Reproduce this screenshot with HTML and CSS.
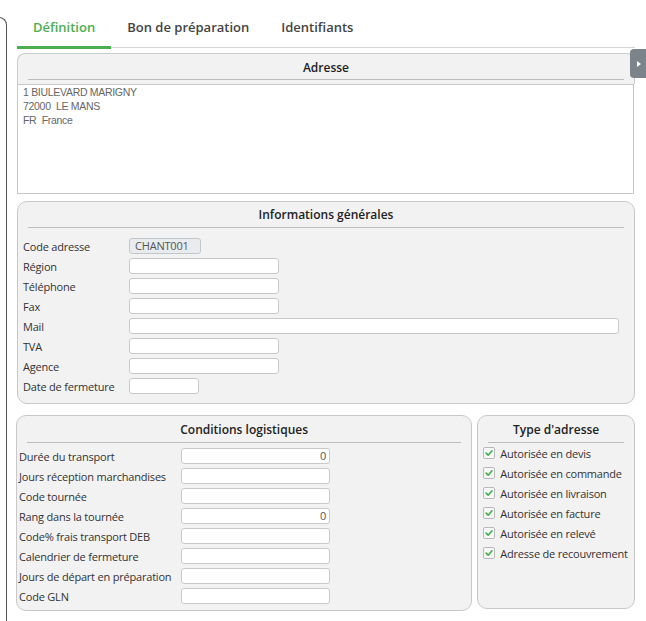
FILE: index.html
```html
<!DOCTYPE html>
<html lang="fr">
<head>
    <meta charset="UTF-8">
    <title>Adresse - Définition</title>
    <link rel="stylesheet" href="styles.css">
</head>
<body>
    <div class="sidebar"></div>

    <main class="content">
        <nav class="tabs">
            <div class="tab active">Définition</div>
            <div class="tab">Bon de préparation</div>
            <div class="tab">Identifiants</div>
        </nav>

        <section class="address-panel">
            <div class="panel-head">
                <h2 class="panel-title">Adresse</h2>
            </div>
            <div class="address-box">
                <div>1 BIULEVARD MARIGNY</div>
                <div>72000&nbsp; LE MANS</div>
                <div>FR&nbsp; France</div>
            </div>
        </section>

        <section class="panel info-panel">
            <h2 class="panel-title">Informations générales</h2>
            <div class="form-rows">
                <div class="row"><label>Code adresse</label><div class="field field-code">CHANT001</div></div>
                <div class="row"><label>Région</label><div class="field field-md"></div></div>
                <div class="row"><label>Téléphone</label><div class="field field-md"></div></div>
                <div class="row"><label>Fax</label><div class="field field-md"></div></div>
                <div class="row"><label>Mail</label><div class="field field-wide"></div></div>
                <div class="row"><label>TVA</label><div class="field field-md"></div></div>
                <div class="row"><label>Agence</label><div class="field field-md"></div></div>
                <div class="row"><label>Date de fermeture</label><div class="field field-sm"></div></div>
            </div>
        </section>

        <div class="bottom-row">
            <section class="panel logistic-panel">
                <h2 class="panel-title">Conditions logistiques</h2>
                <div class="form-rows">
                    <div class="row"><label>Durée du transport</label><div class="field num">0</div></div>
                    <div class="row"><label>Jours réception marchandises</label><div class="field"></div></div>
                    <div class="row"><label>Code tournée</label><div class="field"></div></div>
                    <div class="row"><label>Rang dans la tournée</label><div class="field num">0</div></div>
                    <div class="row"><label>Code% frais transport DEB</label><div class="field"></div></div>
                    <div class="row"><label>Calendrier de fermeture</label><div class="field"></div></div>
                    <div class="row"><label>Jours de départ en préparation</label><div class="field"></div></div>
                    <div class="row"><label>Code GLN</label><div class="field"></div></div>
                </div>
            </section>

            <section class="panel type-panel">
                <h2 class="panel-title">Type d'adresse</h2>
                <ul class="checks">
                    <li><span class="box"><svg viewBox="0 0 12 12"><polyline points="2.5,6.2 5,8.6 9.6,3.4"/></svg></span>Autorisée en devis</li>
                    <li><span class="box"><svg viewBox="0 0 12 12"><polyline points="2.5,6.2 5,8.6 9.6,3.4"/></svg></span>Autorisée en commande</li>
                    <li><span class="box"><svg viewBox="0 0 12 12"><polyline points="2.5,6.2 5,8.6 9.6,3.4"/></svg></span>Autorisée en livraison</li>
                    <li><span class="box"><svg viewBox="0 0 12 12"><polyline points="2.5,6.2 5,8.6 9.6,3.4"/></svg></span>Autorisée en facture</li>
                    <li><span class="box"><svg viewBox="0 0 12 12"><polyline points="2.5,6.2 5,8.6 9.6,3.4"/></svg></span>Autorisée en relevé</li>
                    <li><span class="box"><svg viewBox="0 0 12 12"><polyline points="2.5,6.2 5,8.6 9.6,3.4"/></svg></span>Adresse de recouvrement</li>
                </ul>
            </section>
        </div>
    </main>

    <!-- side drawer handle -->
    <div class="drawer-handle"><span class="arrow"></span></div>
</body>
</html>
```

FILE: styles.css
```css
* {
    margin: 0;
    padding: 0;
    box-sizing: border-box;
}

body {
    font-family: 'Open Sans', sans-serif;
    font-size: 11px;
    letter-spacing: -0.2px;
    color: #333;
    background: #fff;
    display: flex;
    align-items: flex-start;
    width: 646px;
    height: 621px;
    overflow: hidden;
    position: relative;
}

/* edge of the left panel */
.sidebar {
    width: 8px;
    height: 620px;
    margin-top: 17px;
    margin-left: -1px;
    border-top: 1px solid #555;
    border-right: 1px solid #555;
    border-top-right-radius: 8px;
    flex-shrink: 0;
}

.content {
    margin-left: 10px;
    width: 618px;
}

/* Tabs */
.tabs {
    display: flex;
    border-bottom: 1px solid #d4d4d4;
}

.tab {
    padding: 18px 16px 10px;
    line-height: 18px;
    font-size: 13px;
    font-weight: 600;
    letter-spacing: 0;
    color: #444;
    border-bottom: 3px solid transparent;
    margin-bottom: -2px;
}

.tab.active {
    color: #4cae4f;
    border-bottom-color: #4cae4f;
}

/* Panels */
.panel-title {
    font-size: 12px;
    font-weight: 600;
    letter-spacing: 0;
    line-height: 18px;
    color: #222;
    text-align: center;
    margin: 0 10px;
    padding-bottom: 3px;
    border-bottom: 1px solid #bdbdbd;
}

.address-panel {
    margin-top: 5px;
}

.panel-head {
    background: #f2f2f2;
    border: 1px solid #ccc;
    border-bottom: none;
    border-radius: 8px 8px 0 0;
    padding-top: 5px;
    height: 31px;
}

.panel-head .panel-title {
    padding-bottom: 2px;
}

.address-box {
    background: #fff;
    border: 1px solid #c8c8c8;
    margin-right: 1px;
    height: 110px;
    padding: 0 5px;
    font-family: 'Liberation Sans', sans-serif;
    font-size: 10.5px;
    letter-spacing: -0.3px;
    line-height: 14px;
    color: #666;
}

.panel {
    background: #f2f2f2;
    border: 1px solid #c8c8c8;
    border-radius: 10px;
    padding-top: 4px;
}

.info-panel {
    margin-top: 7px;
    padding-bottom: 7px;
}

.form-rows {
    margin-top: 8px;
}

.row {
    display: flex;
    align-items: center;
    height: 20px;
}

.info-panel .row label {
    width: 111px;
    padding-left: 5px;
}

.field {
    height: 16px;
    background: #fff;
    border: 1px solid #c9c9c9;
    border-radius: 3px;
    line-height: 14px;
    padding: 0 4px;
    color: #555;
}

.field-md { width: 150px; }
.field-wide { width: 490px; }
.field-sm { width: 70px; }

.field-code {
    width: 72px;
    background: #e9ecee;
    border-color: #c2c6c9;
    padding-left: 5px;
}

.num {
    text-align: right;
    padding-right: 3px;
}

.bottom-row {
    display: flex;
    gap: 5px;
    margin-top: 11px;
    margin-left: -1px;
}

.logistic-panel {
    width: 457px;
    height: 196px;
    padding-top: 5px;
}

.logistic-panel .form-rows {
    margin-top: 3px;
}

.logistic-panel .row label {
    width: 164px;
    padding-left: 2px;
}

.logistic-panel .field {
    width: 149px;
}

.type-panel {
    width: 158px;
    height: 194px;
    padding-top: 5px;
}

.checks {
    list-style: none;
}

.checks li {
    display: flex;
    align-items: center;
    height: 20px;
    padding-left: 5px;
}

.box {
    width: 12px;
    height: 12px;
    margin-right: 5px;
    background: #f8f8f8;
    border: 1px solid #b9b9b9;
    border-radius: 2px;
    display: flex;
}

.box svg {
    width: 10px;
    height: 10px;
    fill: none;
    stroke: #3fae49;
    stroke-width: 1.9;
    stroke-linecap: round;
    stroke-linejoin: round;
}

.drawer-handle {
    position: absolute;
    left: 630px;
    top: 49px;
    width: 16px;
    height: 29px;
    background: #7b838b;
    border-radius: 4px 0 0 4px;
    display: flex;
    align-items: center;
    justify-content: center;
}

.arrow {
    width: 0;
    height: 0;
    border-top: 3.5px solid transparent;
    border-bottom: 3.5px solid transparent;
    border-left: 4px solid #fff;
    margin-left: 1px;
}
```
